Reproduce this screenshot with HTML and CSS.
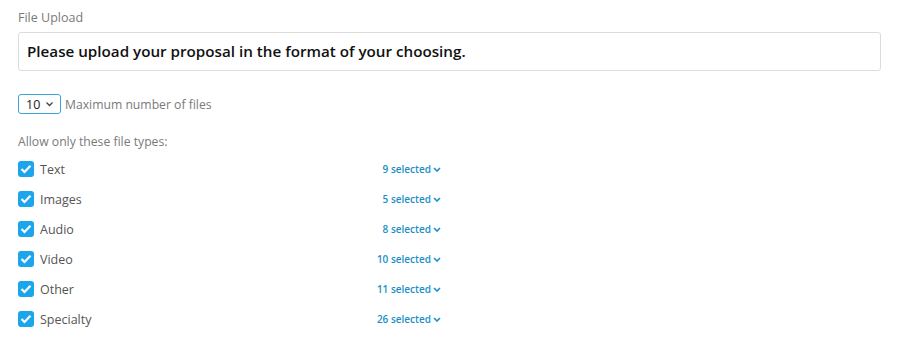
FILE: index.html
```html
<!DOCTYPE html>
<html>
<head>
    <meta charset="utf-8" />
    <title>file upload</title>
<link rel="stylesheet" href="styles.css">
</head>
<body>

<div class="field">
    <p class="field-label">File Upload</p>
    <div class="prompt">Please upload your proposal in the format of your choosing.</div>
</div>

<!-- max files -->
<div class="max-row">
    <div class="select-box">
        <span>10</span>
        <svg width="9" height="6" viewBox="0 0 9 6"><path d="M1.5 1.5 L4.5 4.5 L7.5 1.5" fill="none" stroke="#444" stroke-width="1.3"/></svg>
    </div>
    <span class="muted">Maximum number of files</span>
</div>

<p class="muted types-title">Allow only these file types:</p>

<!-- file types -->
<div class="types">
    <div class="type-row">
        <label class="check"><span class="box"><svg width="12" height="10" viewBox="0 0 12 10"><path d="M1.5 5 L4.5 8 L10.5 1.8" fill="none" stroke="#fff" stroke-width="2.2"/></svg></span>Text</label>
        <a class="sel">9 selected <svg width="8" height="5" viewBox="0 0 8 5"><path d="M1 1 L4 4 L7 1" fill="none" stroke="#1b8fc6" stroke-width="1.6"/></svg></a>
    </div>
    <div class="type-row">
        <label class="check"><span class="box"><svg width="12" height="10" viewBox="0 0 12 10"><path d="M1.5 5 L4.5 8 L10.5 1.8" fill="none" stroke="#fff" stroke-width="2.2"/></svg></span>Images</label>
        <a class="sel">5 selected <svg width="8" height="5" viewBox="0 0 8 5"><path d="M1 1 L4 4 L7 1" fill="none" stroke="#1b8fc6" stroke-width="1.6"/></svg></a>
    </div>
    <div class="type-row">
        <label class="check"><span class="box"><svg width="12" height="10" viewBox="0 0 12 10"><path d="M1.5 5 L4.5 8 L10.5 1.8" fill="none" stroke="#fff" stroke-width="2.2"/></svg></span>Audio</label>
        <a class="sel">8 selected <svg width="8" height="5" viewBox="0 0 8 5"><path d="M1 1 L4 4 L7 1" fill="none" stroke="#1b8fc6" stroke-width="1.6"/></svg></a>
    </div>
    <div class="type-row">
        <label class="check"><span class="box"><svg width="12" height="10" viewBox="0 0 12 10"><path d="M1.5 5 L4.5 8 L10.5 1.8" fill="none" stroke="#fff" stroke-width="2.2"/></svg></span>Video</label>
        <a class="sel">10 selected <svg width="8" height="5" viewBox="0 0 8 5"><path d="M1 1 L4 4 L7 1" fill="none" stroke="#1b8fc6" stroke-width="1.6"/></svg></a>
    </div>
    <div class="type-row">
        <label class="check"><span class="box"><svg width="12" height="10" viewBox="0 0 12 10"><path d="M1.5 5 L4.5 8 L10.5 1.8" fill="none" stroke="#fff" stroke-width="2.2"/></svg></span>Other</label>
        <a class="sel">11 selected <svg width="8" height="5" viewBox="0 0 8 5"><path d="M1 1 L4 4 L7 1" fill="none" stroke="#1b8fc6" stroke-width="1.6"/></svg></a>
    </div>
    <div class="type-row">
        <label class="check"><span class="box"><svg width="12" height="10" viewBox="0 0 12 10"><path d="M1.5 5 L4.5 8 L10.5 1.8" fill="none" stroke="#fff" stroke-width="2.2"/></svg></span>Specialty</label>
        <a class="sel">26 selected <svg width="8" height="5" viewBox="0 0 8 5"><path d="M1 1 L4 4 L7 1" fill="none" stroke="#1b8fc6" stroke-width="1.6"/></svg></a>
    </div>
</div>

</body>
</html>
```

FILE: styles.css
```css
body {
    margin: 0;
    padding: 10px 18px 0 18px;
    font-family: "Open Sans", "Noto Sans", sans-serif;
    color: #555;
    background: #fff;
}

/* label + prompt box */
.field-label {
    margin: 0 0 6px 0;
    font-size: 12.5px;
    line-height: 16px;
    color: #7a7a7a;
}

.prompt {
    width: 863px;
    height: 39px;
    box-sizing: border-box;
    padding: 0 8px;
    border: 1px solid #dcdcdc;
    border-radius: 3px;
    font-size: 15.2px;
    font-weight: 600;
    line-height: 37px;
    color: #111;
}

/* max files row */
.max-row {
    display: flex;
    align-items: center;
    margin-top: 23px;
    height: 20px;
}

.select-box {
    display: flex;
    align-items: center;
    justify-content: space-between;
    width: 43px;
    height: 20px;
    box-sizing: border-box;
    padding: 0 6px 0 7px;
    border: 1px solid #3aa5dd;
    border-radius: 3px;
    font-size: 12.5px;
    color: #222;
    margin-right: 4px;
}

.muted {
    font-size: 12.2px;
    color: #7a7a7a;
}

.types-title {
    margin: 20px 0 4px 0;
    line-height: 16px;
}

/* file type rows */
.types {
    width: 423px;
}

.type-row {
    display: flex;
    align-items: center;
    justify-content: space-between;
    height: 30px;
}

.check {
    display: flex;
    align-items: center;
    font-size: 12.5px;
    color: #555;
}

.box {
    display: flex;
    align-items: center;
    justify-content: center;
    width: 16px;
    height: 16px;
    border-radius: 3px;
    background-color: #1ba6ec;
    margin-right: 6px;
}

.sel {
    display: flex;
    align-items: center;
    gap: 2px;
    font-size: 10px;
    font-weight: 600;
    color: #1b8fc6;
    cursor: pointer;
}
```
